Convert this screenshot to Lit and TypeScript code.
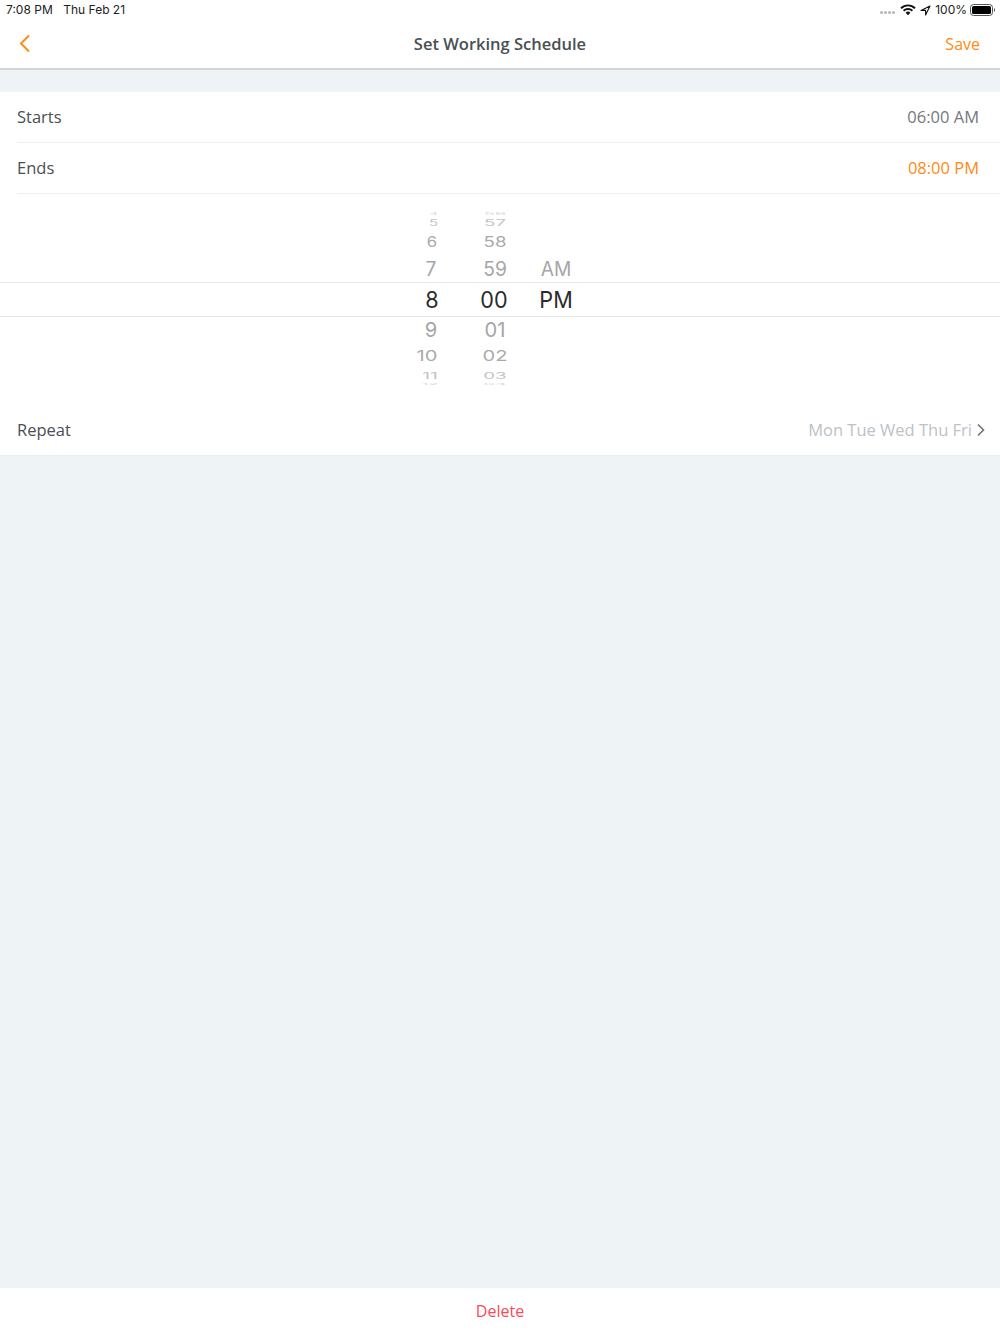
import { LitElement, html, css } from "lit";
import { customElement } from "lit/decorators.js";

type Cell = { t: string; y: number; s: number; x: number; c: string; fs: number; dx?: number };

const hours: Cell[] = [
  { t: "4", y: 213.5, s: 0.18, x: 0.8, c: "#d8d8d8", fs: 16, dx: 2 },
  { t: "5", y: 222.5, s: 0.62, x: 1.0, c: "#c4c4c4", fs: 15, dx: 1.5 },
  { t: "6", y: 241.8, s: 0.85, x: 0.98, c: "#aaaaaa", fs: 17 },
  { t: "7", y: 268.5, s: 0.98, x: 0.96, c: "#a6a6a6", fs: 20, dx: -1 },
  { t: "8", y: 299.5, s: 1, x: 0.94, c: "#2b2b2b", fs: 23 },
  { t: "9", y: 329.5, s: 0.98, x: 0.96, c: "#a6a6a6", fs: 21, dx: -1 },
  { t: "10", y: 355.5, s: 0.82, x: 1.12, c: "#aaaaaa", fs: 18, dx: -5 },
  { t: "11", y: 376, s: 0.55, x: 1.2, c: "#c4c4c4", fs: 16, dx: -2 },
  { t: "12", y: 384, s: 0.15, x: 1, c: "#d8d8d8", fs: 16, dx: -2 },
];
const mins: Cell[] = [
  { t: "56", y: 213.5, s: 0.18, x: 1.15, c: "#d8d8d8", fs: 16 },
  { t: "57", y: 222.5, s: 0.62, x: 1.25, c: "#c4c4c4", fs: 15 },
  { t: "58", y: 241.8, s: 0.85, x: 1.1, c: "#aaaaaa", fs: 17 },
  { t: "59", y: 268.5, s: 0.98, x: 0.96, c: "#a6a6a6", fs: 20 },
  { t: "00", y: 299.5, s: 1, x: 0.94, c: "#2b2b2b", fs: 23, dx: -1 },
  { t: "01", y: 329.5, s: 0.98, x: 0.96, c: "#a6a6a6", fs: 21 },
  { t: "02", y: 355.5, s: 0.82, x: 1.12, c: "#aaaaaa", fs: 18 },
  { t: "03", y: 375.5, s: 0.55, x: 1.25, c: "#c4c4c4", fs: 15 },
  { t: "04", y: 384, s: 0.15, x: 1.15, c: "#d8d8d8", fs: 16 },
];
const ampm: Cell[] = [
  { t: "AM", y: 268.5, s: 0.98, x: 0.96, c: "#a6a6a6", fs: 20 },
  { t: "PM", y: 299.5, s: 1, x: 0.94, c: "#2b2b2b", fs: 23 },
];

@customElement("app-root")
export class AppRoot extends LitElement {
  static styles = css`
    :host { display: flex; flex-direction: column; width: 1000px; height: 1334px; background: #eef3f6; font-family: "Open Sans", sans-serif; overflow: hidden; }
    .top { background: #fff; border-bottom: 2px solid #d3d5d6; height: 68px; display: flex; flex-direction: column; }
    .status { height: 20px; display: flex; align-items: center; padding: 0 4px 0 6px; font: 12px/20px Inter, sans-serif; color: #222; }
    .status .date { margin-left: 10.5px; }
    .status .right { margin-left: auto; display: flex; align-items: center; }
    .dots { display: flex; gap: 1px; margin: 4px 4px 0 0; }
    .dots i { width: 3px; height: 3px; border-radius: 50%; background: #b5b5b5; }
    .pct { margin: 0 3px 0 4px; }
    .nav { flex: 1; display: grid; grid-template-columns: 1fr auto 1fr; align-items: center; padding: 0 20px; }
    .title { font-size: 16.5px; font-weight: 600; color: #4a4f53; padding-bottom: 1px; }
    .save { justify-self: end; font-size: 16px; color: #ff8a14; }
    .back { display: block; margin-left: -2px; }
    .spacer { height: 22px; }
    .list { background: #fff; }
    .row { box-sizing: content-box; margin-left: 17px; height: 49px; padding-bottom: 1px; border-bottom: 1px solid #eef0f1; display: flex; align-items: center; justify-content: space-between; padding-right: 21px; font-size: 16.5px; color: #4a4f53; }
    .row .val { color: #74797d; }
    .row .on { color: #ff8a14; }
    .picker { position: relative; height: 211px; }
    .band { position: absolute; left: 0; right: 0; top: 88px; height: 33px; border-top: 1px solid #e6e6e6; border-bottom: 1px solid #e6e6e6; }
    .cell { position: absolute; white-space: nowrap; font-family: Inter, sans-serif; line-height: 1; }
    .row.repeat { border-bottom: 1px solid #e9edef; margin-left: 0; padding-left: 17px; padding-right: 15px; }
    .days { display: flex; align-items: center; gap: 5px; color: #bcc2c7; }
    .fill { flex: 1; }
    .del { height: 46px; background: #fff; display: flex; align-items: center; justify-content: center; color: #fb4a56; font-size: 16px; }
  `;

  private cells(list: Cell[], cx: number) {
    return list.map(
      (c) => html`<div
        class="cell"
        style="left:${cx + (c.dx ?? 0)}px;top:${c.y - 194}px;color:${c.c};font-size:${c.fs}px;transform:translate(-50%,-50%) scale(${c.x},${c.s})"
      >${c.t}</div>`
    );
  }

  render() {
    return html`
      <div class="top">
        <div class="status">
          <span>7:08 PM</span><span class="date">Thu Feb 21</span>
          <div class="right">
            <div class="dots"><i></i><i></i><i></i><i></i></div>
            <svg width="16" height="12" viewBox="0 0 16 12" style="margin-left:1px">
              <path d="M1 4.2a10 10 0 0 1 14 0" fill="none" stroke="#111" stroke-width="1.9"/>
              <path d="M3.6 6.8a6.4 6.4 0 0 1 8.8 0" fill="none" stroke="#111" stroke-width="1.9"/>
              <path d="M5.6 8.8a3.4 3.4 0 0 1 4.8 0L8 11.2z" fill="#111"/>
            </svg>
            <svg width="11" height="11" viewBox="0 0 11 11" style="margin-left:4px">
              <path d="M10 1 1 5.4h4.6V10z" fill="none" stroke="#111" stroke-width="1.1" stroke-linejoin="round"/>
            </svg>
            <span class="pct">100%</span>
            <svg width="26" height="12" viewBox="0 0 26 12">
              <rect x="0.5" y="0.5" width="22" height="11" rx="3" fill="none" stroke="#555"/>
              <rect x="2" y="2" width="19" height="8" rx="1.5" fill="#000"/>
              <path d="M24 4v4a2 2 0 0 0 1-2 2 2 0 0 0-1-2z" fill="#555"/>
            </svg>
          </div>
        </div>
        <div class="nav">
          <svg class="back" width="14" height="20" viewBox="0 0 14 20">
            <path d="M11 1.5 3 9.5l8 8" fill="none" stroke="#ff8a14" stroke-width="2"/>
          </svg>
          <div class="title">Set Working Schedule</div>
          <div class="save">Save</div>
        </div>
      </div>
      <div class="spacer"></div>
      <div class="list">
        <div class="row"><span>Starts</span><span class="val">06:00 AM</span></div>
        <div class="row"><span>Ends</span><span class="on">08:00 PM</span></div>
        <div class="picker">
          <div class="band"></div>
          ${this.cells(hours, 432)}
          ${this.cells(mins, 495)}
          ${this.cells(ampm, 556)}
        </div>
        <div class="row repeat">
          <span>Repeat</span>
          <span class="days">Mon Tue Wed Thu Fri
            <svg width="8" height="14" viewBox="0 0 8 14"><path d="M1 1.5 6.5 7 1 12.5" fill="none" stroke="#6f7478" stroke-width="1.6"/></svg>
          </span>
        </div>
      </div>
      <div class="fill"></div>
      <div class="del">Delete</div>
    `;
  }
}
